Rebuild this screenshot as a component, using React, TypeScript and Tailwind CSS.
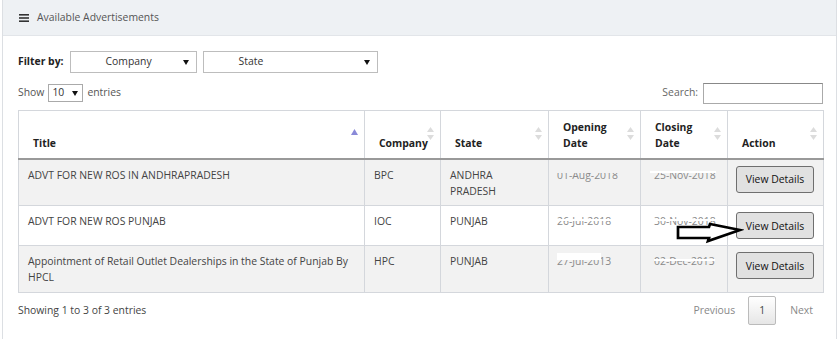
import React from "react";

type Row = {
  title: string;
  company: string;
  state: string;
  opening: string;
  closing: string;
  striped: boolean;
};

const rows: Row[] = [
  {
    title: "ADVT FOR NEW ROS IN ANDHRAPRADESH",
    company: "BPC",
    state: "ANDHRA PRADESH",
    opening: "01-Aug-2018",
    closing: "25-Nov-2018",
    striped: true,
  },
  {
    title: "ADVT FOR NEW ROS PUNJAB",
    company: "IOC",
    state: "PUNJAB",
    opening: "26-Jul-2018",
    closing: "30-Nov-2018",
    striped: false,
  },
  {
    title: "Appointment of Retail Outlet Dealerships in the State of Punjab By HPCL",
    company: "HPC",
    state: "PUNJAB",
    opening: "27-Jul-2013",
    closing: "02-Dec-2013",
    striped: true,
  },
];

function SortIcon({ active }: { active?: boolean }) {
  if (active) {
    return (
      <svg className="absolute right-[6px] top-[18px]" width="7" height="6" viewBox="0 0 7 6">
        <path d="M3.5 0 L7 6 L0 6 Z" fill="#8a8ad8" />
      </svg>
    );
  }
  return (
    <svg className="absolute right-[6px] top-[16px]" width="7" height="13" viewBox="0 0 7 13">
      <path d="M3.5 0 L7 5 L0 5 Z" fill="#dcdcdc" />
      <path d="M3.5 13 L7 8 L0 8 Z" fill="#dcdcdc" />
    </svg>
  );
}

function Caret() {
  return (
    <svg width="6" height="5" viewBox="0 0 6 5">
      <path d="M0 0 L6 0 L3 5 Z" fill="#111" />
    </svg>
  );
}

function DateCell({ text, mask }: { text: string; mask: "top" | "mid" | "block" | "line" }) {
  return (
    <span className="relative inline-block text-[#8a8a8a]">
      {text}
      {mask === "top" && <span className="absolute left-0 right-0 top-0 h-[6px] bg-[#f2f2f2]" />}
      {mask === "line" && <span className="absolute left-[-4px] right-0 top-[4px] h-[2px] bg-white" />}
      {mask === "mid" && <span className="absolute left-0 right-0 top-[6px] h-[2px] bg-white" />}
      {mask === "block" && <span className="absolute left-0 right-[10px] top-0 h-[7px] bg-white" />}
    </span>
  );
}

export default function App() {
  return (
    <div
      className="h-[339px] w-[839px] overflow-hidden bg-white text-[10.4px] text-[#333]"
      style={{ fontFamily: '"Open Sans", "Liberation Sans", sans-serif' }}
    >
      <div className="relative ml-[2px] h-full w-[835px] border-x border-[#dcdfe3]">
        <div className="flex h-[36px] items-center gap-[8px] border-b border-[#e2e5e9] bg-[#eef1f4] pl-[16px] pt-[1px] text-[#555]">
          <svg width="10" height="8" viewBox="0 0 10 8">
            <rect x="0" y="0" width="10" height="1.6" fill="#333" />
            <rect x="0" y="3.2" width="10" height="1.6" fill="#333" />
            <rect x="0" y="6.4" width="10" height="1.6" fill="#333" />
          </svg>
          <span>Available Advertisements</span>
        </div>

        <div className="pl-[15px] pt-[15px]">
          <div className="flex items-center gap-[6px]">
            <span className="font-bold text-[#222]">Filter by:</span>
            <div className="flex h-[22px] w-[127px] items-center justify-between border border-[#bdbdbd] pl-[35px] pr-[7px]">
              <span>Company</span>
              <Caret />
            </div>
            <div className="flex h-[22px] w-[175px] items-center justify-between border border-[#bdbdbd] pl-[35px] pr-[7px]">
              <span>State</span>
              <Caret />
            </div>
          </div>

          <div className="mt-[9px] flex h-[22px] w-[805px] items-center">
            <span className="text-[#555]">Show</span>
            <div className="ml-[4px] flex h-[18px] w-[35px] items-center justify-between border border-[#aaa] pl-[3px] pr-[4px]">
              <span>10</span>
              <Caret />
            </div>
            <span className="ml-[4px] text-[#555]">entries</span>
            <span className="ml-auto text-[#666]">Search:</span>
            <div className="ml-[5px] h-[21px] w-[120px] border border-[#aaa] border-t-[#888]" />
          </div>

          <table className="mt-[6px] w-[805px] table-fixed border-collapse border border-[#d4d7dc]">
            <colgroup>
              <col className="w-[346px]" />
              <col className="w-[76px]" />
              <col className="w-[108px]" />
              <col className="w-[92px]" />
              <col className="w-[87px]" />
              <col className="w-[96px]" />
            </colgroup>
            <thead>
              <tr className="h-[48px] border-b-2 border-[#999] text-left align-bottom text-[#222]">
                {[
                  ["Title", true],
                  ["Company", false],
                  ["State", false],
                  ["Opening Date", false],
                  ["Closing Date", false],
                  ["Action", false],
                ].map(([h, active]) => (
                  <th
                    key={h as string}
                    className="relative border-x border-[#d4d7dc] pb-[7px] pl-[14px] pr-[18px] font-bold leading-[16px]"
                  >
                    {h as string}
                    <SortIcon active={active as boolean} />
                  </th>
                ))}
              </tr>
            </thead>
            <tbody>
              {rows.map((r, i) => (
                <tr
                  key={r.title}
                  className={`${r.striped ? "bg-[#f2f2f2]" : "bg-white"} ${
                    i === 1 ? "h-[40px]" : "h-[47px]"
                  } border-t border-[#d4d7dc] align-top leading-[16px] text-[#444]`}
                >
                  <td className="border-x border-[#d4d7dc] pl-[9px] pr-[8px] pt-[7px]">{r.title}</td>
                  <td className="border-x border-[#d4d7dc] pl-[9px] pt-[7px]">{r.company}</td>
                  <td className="border-x border-[#d4d7dc] pl-[9px] pr-[20px] pt-[7px]">{r.state}</td>
                  <td className="border-x border-[#d4d7dc] pl-[8px] pt-[7px]">
                    <DateCell text={r.opening} mask={i === 0 ? "top" : i === 1 ? "mid" : "block"} />
                  </td>
                  <td className="border-x border-[#d4d7dc] pl-[13px] pt-[7px]">
                    <DateCell text={r.closing} mask={i === 0 ? "line" : "mid"} />
                  </td>
                  <td className="border-x border-[#d4d7dc] pl-[8px] pt-[6px]">
                    <button className="h-[27px] w-[78px] rounded-[3px] border border-[#6f6f6f] bg-[#e1e1e1] text-[10.4px] text-[#111]">
                      View Details
                    </button>
                  </td>
                </tr>
              ))}
              <tr className="h-0 border-t-[1.5px] border-[#555]" />
            </tbody>
          </table>

          <div className="mt-[3px] flex w-[805px] items-start">
            <span className="mt-[7px] text-[#444]">Showing 1 to 3 of 3 entries</span>
            <div className="ml-auto flex items-center pr-[10px]">
              <span className="text-[#888]">Previous</span>
              <span className="ml-[13px] flex h-[29px] w-[28px] items-center justify-center rounded-[2px] border border-[#bbb] bg-gradient-to-b from-white to-[#e6e6e6] text-[#444]">
                1
              </span>
              <span className="ml-[14px] text-[#888]">Next</span>
            </div>
          </div>
        </div>

        <svg className="absolute left-[673px] top-[216px]" width="68" height="30" viewBox="0 0 68 30">
          <path
            d="M2 11 L33 11 L34 8 L64 14 L32 25 L33 22 L2 22 Z"
            fill="white"
            stroke="black"
            strokeWidth="2.7"
            strokeLinejoin="miter"
          />
        </svg>
      </div>
    </div>
  );
}
